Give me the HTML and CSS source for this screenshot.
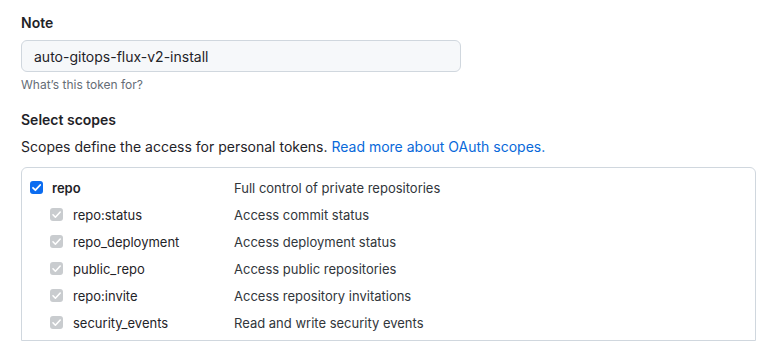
FILE: index.html
```html
<!DOCTYPE html>
<html lang="en">
<head>
    <meta charset="UTF-8">
    <title>New personal access token</title>
    <link rel="stylesheet" href="styles.css">
</head>
<body>
    <div class="form">
        <label class="field-label" for="note">Note</label>
        <input class="note-input" id="note" type="text" value="auto-gitops-flux-v2-install">
        <div class="note-hint">What’s this token for?</div>

        <div class="field-label scopes-title">Select scopes</div>
        <p class="scopes-intro">Scopes define the access for personal tokens. <a href="#">Read more about OAuth scopes.</a></p>

        <div class="scope-box">
            <div class="scope-row">
                <div class="scope-name parent">
                    <span class="check on"><svg viewBox="0 0 13 13" width="13" height="13"><path d="M3 6.8l2.4 2.4L10.2 4" fill="none" stroke="#fff" stroke-width="1.8" stroke-linecap="round" stroke-linejoin="round"/></svg></span>
                    repo
                </div>
                <div class="scope-desc">Full control of private repositories</div>
            </div>
            <div class="scope-row child">
                <div class="scope-name">
                    <span class="check off"><svg viewBox="0 0 13 13" width="13" height="13"><path d="M3 6.8l2.4 2.4L10.2 4" fill="none" stroke="#fff" stroke-width="1.6" stroke-linecap="round" stroke-linejoin="round"/></svg></span>
                    repo:status
                </div>
                <div class="scope-desc">Access commit status</div>
            </div>
            <div class="scope-row child">
                <div class="scope-name">
                    <span class="check off"><svg viewBox="0 0 13 13" width="13" height="13"><path d="M3 6.8l2.4 2.4L10.2 4" fill="none" stroke="#fff" stroke-width="1.6" stroke-linecap="round" stroke-linejoin="round"/></svg></span>
                    repo_deployment
                </div>
                <div class="scope-desc">Access deployment status</div>
            </div>
            <div class="scope-row child">
                <div class="scope-name">
                    <span class="check off"><svg viewBox="0 0 13 13" width="13" height="13"><path d="M3 6.8l2.4 2.4L10.2 4" fill="none" stroke="#fff" stroke-width="1.6" stroke-linecap="round" stroke-linejoin="round"/></svg></span>
                    public_repo
                </div>
                <div class="scope-desc">Access public repositories</div>
            </div>
            <div class="scope-row child">
                <div class="scope-name">
                    <span class="check off"><svg viewBox="0 0 13 13" width="13" height="13"><path d="M3 6.8l2.4 2.4L10.2 4" fill="none" stroke="#fff" stroke-width="1.6" stroke-linecap="round" stroke-linejoin="round"/></svg></span>
                    repo:invite
                </div>
                <div class="scope-desc">Access repository invitations</div>
            </div>
            <div class="scope-row child">
                <div class="scope-name">
                    <span class="check off"><svg viewBox="0 0 13 13" width="13" height="13"><path d="M3 6.8l2.4 2.4L10.2 4" fill="none" stroke="#fff" stroke-width="1.6" stroke-linecap="round" stroke-linejoin="round"/></svg></span>
                    security_events
                </div>
                <div class="scope-desc">Read and write security events</div>
            </div>
        </div>
    </div>
</body>
</html>
```

FILE: styles.css
```css
body { margin: 0; background: #fff; color: #1f2328; font-family: Inter, "Noto Sans", sans-serif; font-size: 14px; }
.form { padding: 13px 0 0 21px; width: 735px; }
.field-label { display: block; font-weight: 600; line-height: 20px; margin-bottom: 7px; }
.note-input { display: block; box-sizing: border-box; width: 440px; height: 32px; padding: 0 12px; margin: 0; font: inherit; color: #1f2328; background: #f6f8fa; border: 1px solid #d0d7de; border-radius: 6px; }
.note-hint { font-size: 12px; line-height: 18px; margin-top: 4px; color: #656d76; }
.scopes-title { margin: 16px 0 7px; }
.scopes-intro { margin: 0 0 10px; line-height: 20px; }
.scopes-intro a { color: #0969da; text-decoration: none; }
.scope-box { border: 1px solid #d0d7de; border-radius: 6px 6px 0 0; padding: 6px 0 4px; }
.scope-row { display: grid; grid-template-columns: 204px 1fr; align-items: center; height: 27px; padding-left: 8px; font-size: 13px; }
.scope-name { display: flex; align-items: center; gap: 9px; }
.scope-name.parent { font-weight: 600; }
.child .scope-name { padding-left: 20px; gap: 10px; }
.scope-desc { color: #31363b; }
.check { display: block; width: 13px; height: 13px; border-radius: 3px; }
.check svg { display: block; }
.check.on { background: #0b6cf0; }
.check.off { background: #c9cccf; }
```
